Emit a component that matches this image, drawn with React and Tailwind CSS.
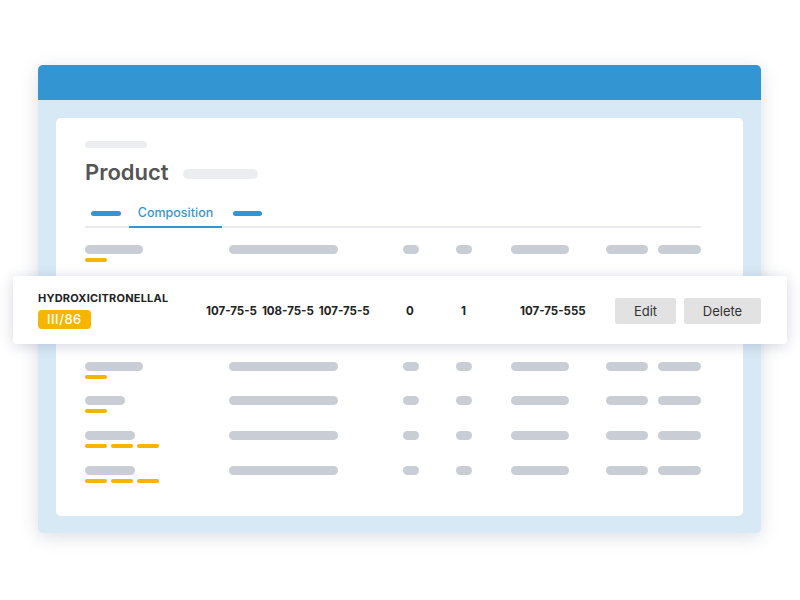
import React from 'react';

const bar = 'h-[9px] rounded-full bg-[#c9cdd6]';
const gold = 'h-[4px] w-[22px] rounded-full bg-[#f6b500]';

const rows = [
  { first: 58, marks: 1 },
  { first: 58, marks: 1 },
  { first: 40, marks: 1 },
  { first: 50, marks: 3 },
  { first: 50, marks: 3 },
];

const SkeletonRow = ({ first, marks, className = '' }) => (
  <div className={`grid grid-cols-[144px_174px_53px_55px_95px_52px_43px] items-start ${className}`}>
    <div className="flex flex-col gap-[4px]">
      <div className={bar} style={{ width: first }} />
      <div className="flex gap-[4px]">
        {Array.from({ length: marks }).map((_, i) => (
          <div key={i} className={gold} />
        ))}
      </div>
    </div>
    <div className={`${bar} w-[109px]`} />
    <div className={`${bar} w-[16px]`} />
    <div className={`${bar} w-[16px]`} />
    <div className={`${bar} w-[58px]`} />
    <div className={`${bar} w-[42px]`} />
    <div className={`${bar} w-[43px]`} />
  </div>
);

const FocusRow = () => (
  <div className="relative -ml-[72px] -mr-[86px] mt-[14px] flex h-[68px] items-center rounded-[3px] bg-white pl-[25px] pr-[26px] text-[#222] shadow-[0_2px_14px_rgba(60,70,110,0.22)]">
    <div className="flex w-[168px] flex-col items-start gap-[5px]">
      <span className="text-[11px] font-bold leading-[14px] tracking-[0.2px]">HYDROXICITRONELLAL</span>
      <span className="rounded-[4px] bg-[#f6b500] px-[9px] text-[13px] font-medium leading-[19px] tracking-[0.5px] text-white">III/86</span>
    </div>
    <div className="mt-[4px] flex w-[200px] gap-[5px] text-[11.5px] font-bold">
      <span>107-75-5</span>
      <span>108-75-5</span>
      <span>107-75-5</span>
    </div>
    <div className="mt-[4px] w-[55px] text-[11.5px] font-bold">0</div>
    <div className="mt-[4px] w-[59px] text-[11.5px] font-bold">1</div>
    <div className="mt-[4px] w-[95px] text-[11.5px] font-bold">107-75-555</div>
    <div className="mt-[2px] flex gap-[8px]">
      <button className="h-[26px] w-[61px] rounded-[2px] bg-[#e2e2e2] pt-[1px] text-[13px] text-[#333]">Edit</button>
      <button className="h-[26px] w-[77px] rounded-[2px] bg-[#e2e2e2] pt-[1px] text-[13px] text-[#333]">Delete</button>
    </div>
  </div>
);

export default function App() {
  return (
    <div className="h-[600px] w-[800px] overflow-hidden bg-white pl-[38px] pt-[65px]" style={{ fontFamily: 'Inter, "Noto Sans", sans-serif' }}>
      <div className="h-[468px] w-[723px] rounded-[5px] bg-[#d7e9f5] shadow-[0_4px_18px_rgba(60,70,110,0.18)]">
        <div className="h-[35px] rounded-t-[5px] bg-[#3396d2]" />
        <div className="px-[18px] pt-[18px]">
          <div className="h-[398px] rounded-[5px] bg-white pl-[29px] pr-[42px] pt-[23px]">
            <div className="h-[7px] w-[62px] rounded-full bg-[#ebedf1]" />
            <div className="mt-[10px] flex items-start">
              <h1 className="text-[22px] font-semibold leading-[28px] text-[#555]">Product</h1>
              <div className="ml-[14px] mt-[11px] h-[10px] w-[75px] rounded-full bg-[#ebedf1]" />
            </div>
            <div className="mt-[19px] flex items-center border-b-2 border-[#e8eaee]">
              <div className="flex w-[44px] justify-center self-stretch items-center pb-[5px]">
                <div className="ml-[-2px] h-[5px] w-[30px] rounded-full bg-[#3396d2]" />
              </div>
              <div className="-mb-[2px] w-[93px] border-b-2 border-[#3396d2] pb-[5px] text-center text-[12.5px] font-medium leading-[16px] text-[#3b95d0]">
                Composition
              </div>
              <div className="flex w-[51px] justify-center self-stretch items-center pb-[5px]">
                <div className="h-[5px] w-[29px] rounded-full bg-[#3396d2]" />
              </div>
            </div>
            <SkeletonRow {...rows[0]} className="mt-[17px]" />
            <FocusRow />
            <SkeletonRow {...rows[1]} className="mt-[18px]" />
            <SkeletonRow {...rows[2]} className="mt-[17px]" />
            <SkeletonRow {...rows[3]} className="mt-[18px]" />
            <SkeletonRow {...rows[4]} className="mt-[18px]" />
          </div>
        </div>
      </div>
    </div>
  );
}
